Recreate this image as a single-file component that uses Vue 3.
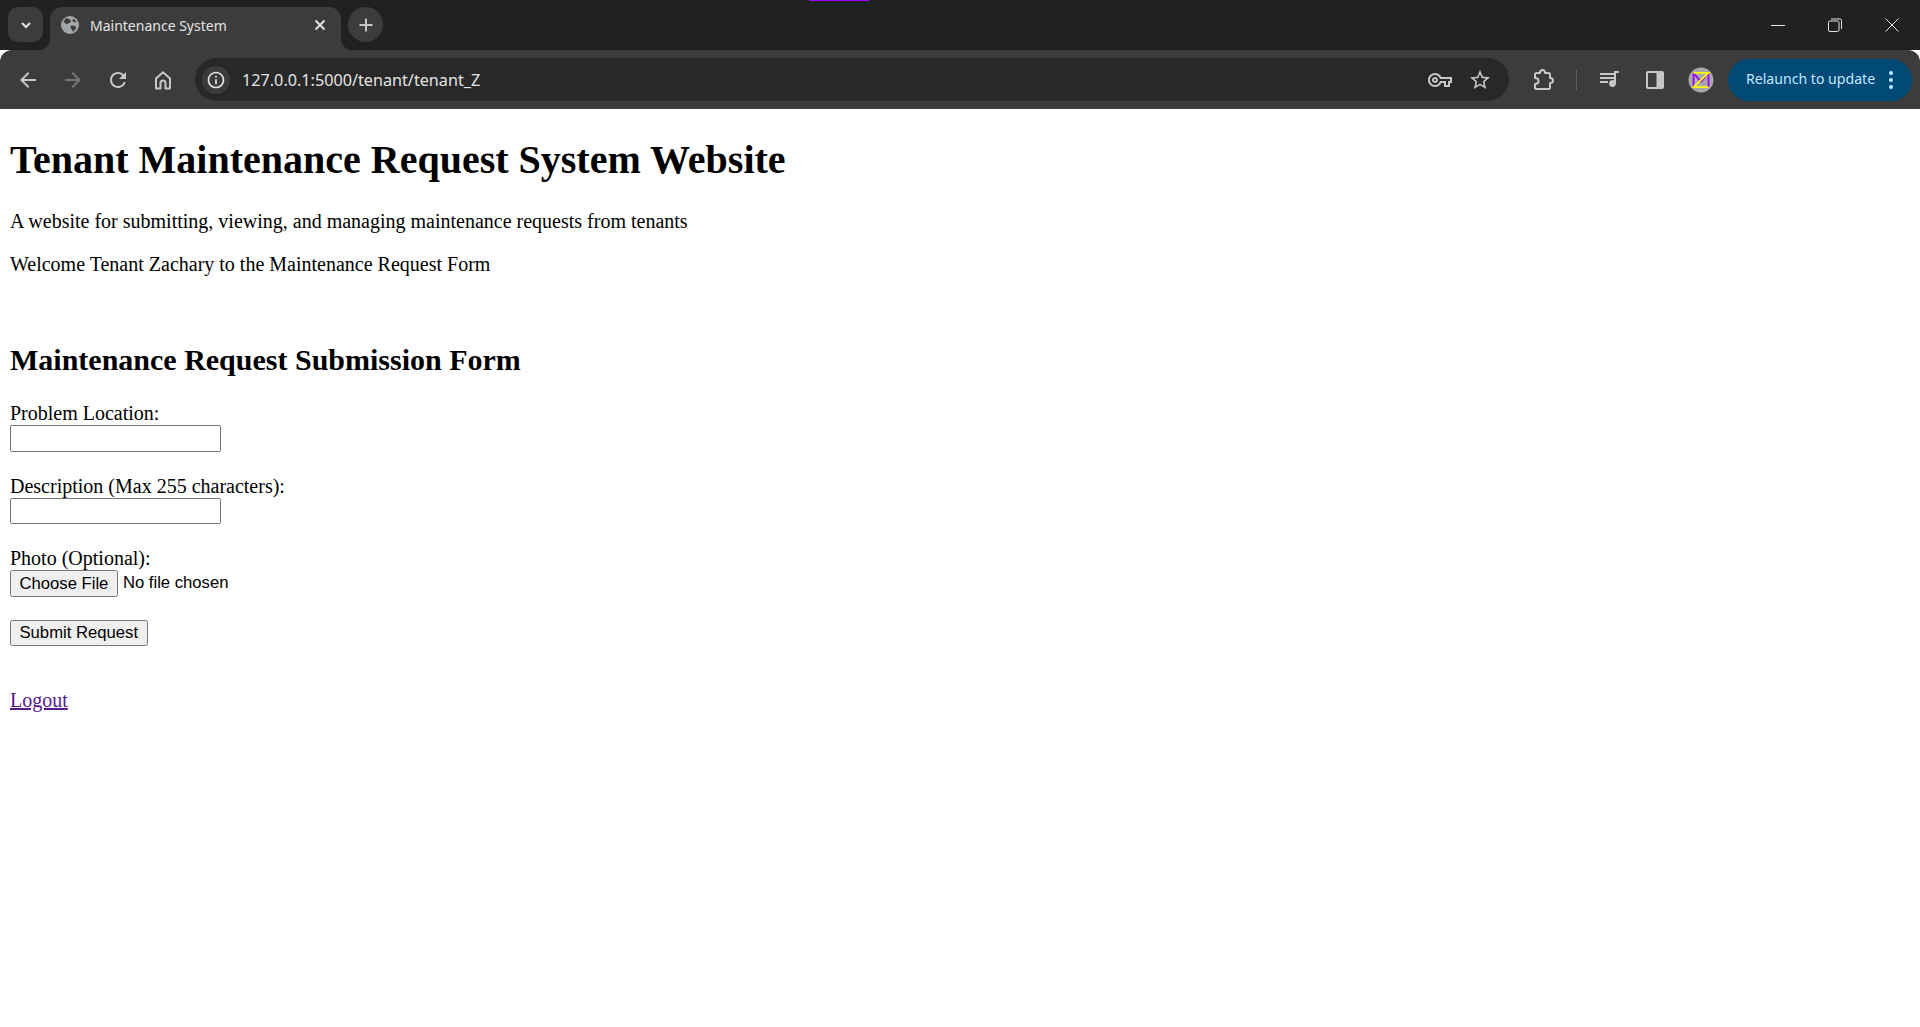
<template>
  <div class="browser">
    <div class="tabstrip">
      <button class="tab-search">
        <svg width="16" height="16" viewBox="0 0 16 16"><path d="M4 6l4 4 4-4" fill="none" stroke="#e3e3e3" stroke-width="2"/></svg>
      </button>
      <div class="tab">
        <svg class="favicon" width="18" height="18" viewBox="0 0 18 18">
          <circle cx="9" cy="9" r="9" fill="#a3a6a8"/>
          <path d="M5 2l4 1.500 1 2-2.500 2-2 .5L2.500 6zM10 9.500l4.500.5.500 2.500-3 3.500-1-2.500-1.500-1.500zM12 2.500l3.500 3-2 1-2-1.500z" fill="#3c3c3c"/>
        </svg>
        <span class="tab-title">Maintenance System</span>
        <svg class="tab-close" width="12" height="12" viewBox="0 0 12 12"><path d="M1.500 1.500l9 9M10.500 1.500l-9 9" stroke="#e3e3e3" stroke-width="2"/></svg>
      </div>
      <button class="new-tab">
        <svg width="16" height="16" viewBox="0 0 16 16"><path d="M8 1.500v13M1.500 8h13" stroke="#c7c7c7" stroke-width="2"/></svg>
      </button>
      <div class="tabstrip-space"><i class="group-line"></i></div>
      <div class="window-buttons">
        <svg width="14" height="14" viewBox="0 0 14 14"><path d="M0 7.500h14" stroke="#e3e3e3"/></svg>
        <svg width="14" height="14" viewBox="0 0 14 14" fill="none" stroke="#e3e3e3"><rect x=".5" y="3" width="10.500" height="10.500" rx="1.500"/><path d="M3 1h9a1.500 1.500 0 0 1 1.500 1.500V11"/></svg>
        <svg width="14" height="14" viewBox="0 0 14 14"><path d="M.5.500l13 13M13.500.500l-13 13" stroke="#e3e3e3"/></svg>
      </div>
    </div>
    <div class="toolbar">
      <div class="nav-icons">
        <svg v-for="n in navIcons" :key="n.d" width="24" height="24" viewBox="0 0 24 24"><path :d="n.d" :fill="n.color"/></svg>
        <svg width="24" height="24" viewBox="0 0 24 24"><path d="M5 20.500V10.500L12 4.300l7 6.200v10h-4.500V15a2.500 2.500 0 0 0-5 0v5.500z" fill="none" stroke="#c7c7c7" stroke-width="2" stroke-linejoin="round"/></svg>
      </div>
      <div class="omnibox">
        <span class="info-chip">
          <svg width="20" height="20" viewBox="0 0 24 24"><path fill="#e3e3e3" d="M11 7h2v2h-2zm0 4h2v6h-2zm1-9C6.480 2 2 6.480 2 12s4.480 10 10 10 10-4.480 10-10S17.520 2 12 2zm0 18c-4.410 0-8-3.590-8-8s3.590-8 8-8 8 3.590 8 8-3.590 8-8 8z"/></svg>
        </span>
        <span class="url">127.0.0.1:5000/tenant/tenant_Z</span>
        <svg class="key" width="24" height="24" viewBox="0 0 24 24"><path fill="#c7c7c7" d="M22 19h-6v-4h-2.680c-1.140 2.420-3.600 4-6.320 4-3.860 0-7-3.140-7-7s3.140-7 7-7c2.720 0 5.170 1.580 6.320 4H24v6h-2v4zm-4-2h2v-4h2v-2H11.940l-.23-.67C11.010 8.340 9.110 7 7 7c-2.760 0-5 2.240-5 5s2.240 5 5 5c2.110 0 4.010-1.340 4.710-3.330l.23-.67H18v4zM7 15c-1.650 0-3-1.350-3-3s1.350-3 3-3 3 1.350 3 3-1.350 3-3 3zm0-4c-.55 0-1 .45-1 1s.45 1 1 1 1-.45 1-1-.45-1-1-1z"/></svg>
        <svg class="star" width="24" height="24" viewBox="0 0 24 24"><path fill="#c7c7c7" d="M22 9.240l-7.190-.62L12 2 9.190 8.630 2 9.240l5.460 4.730L5.820 21 12 17.270 18.180 21l-1.630-7.030L22 9.240zM12 15.400l-3.760 2.270 1-4.280-3.320-2.880 4.380-.38L12 6.100l1.710 4.040 4.380.38-3.320 2.880 1 4.280L12 15.400z"/></svg>
      </div>
      <div class="tools">
        <svg class="ext" width="24" height="24" viewBox="0 0 24 24"><path fill="none" stroke="#c7c7c7" stroke-width="2" stroke-linejoin="round" d="M4.500 21a1.500 1.500 0 0 1-1.500-1.500V16c2 0 3.500-1 3.500-3S5 10 3 10V6.500A1.500 1.500 0 0 1 4.500 5H8c0-1.500 1-3 2.500-3S13 3.500 13 5h3.500A1.500 1.500 0 0 1 18 6.500V10c1.500 0 3 1 3 2.500S19.500 15 18 15v4.500a1.500 1.500 0 0 1-1.500 1.500z"/></svg>
        <i class="sep"></i>
        <svg width="24" height="24" viewBox="0 0 24 24"><path fill="#c7c7c7" d="M2 5h14v2H2zm0 4h14v2H2zm0 4h8v2H2zM21 3v2h-3v10.500a3.500 3.500 0 1 1-2-3.150V3z"/></svg>
        <svg width="24" height="24" viewBox="0 0 24 24"><rect x="3" y="3" width="18" height="18" rx="2" fill="#c7c7c7"/><rect x="5" y="5" width="8.500" height="14" fill="#3c3c3c"/></svg>
        <svg class="avatar" width="26" height="26" viewBox="0 0 26 26">
          <circle cx="13" cy="13" r="12.500" fill="#a8a8a8"/>
          <path d="M5.500 6v14M20.500 6v14M5.500 6l7.500 9M20.500 6l-7.500 9" stroke="#a000ff" stroke-width="1.800" fill="none"/>
          <path d="M5.500 5.800h15l-15 14.400h15" stroke="#ffff00" stroke-width="1.800" fill="none"/>
        </svg>
      </div>
      <div class="relaunch">
        <span>Relaunch to update</span>
        <svg width="6" height="20" viewBox="0 0 6 20"><circle cx="3" cy="3" r="2" fill="#c2e7ff"/><circle cx="3" cy="10" r="2" fill="#c2e7ff"/><circle cx="3" cy="17" r="2" fill="#c2e7ff"/></svg>
      </div>
    </div>
  </div>

  <main class="page">
    <h1>Tenant Maintenance Request System Website</h1>
    <p>A website for submitting, viewing, and managing maintenance requests from tenants</p>
    <p>Welcome Tenant Zachary to the Maintenance Request Form</p>
    <br>
    <h2>Maintenance Request Submission Form</h2>
    <form @submit.prevent>
      <label for="location">Problem Location:</label><br>
      <input id="location" class="field" type="text"><br><br>
      <label for="description">Description (Max 255 characters):</label><br>
      <input id="description" class="field" type="text"><br><br>
      <label for="photo">Photo (Optional):</label><br>
      <input id="photo" type="file"><br><br>
      <button type="submit">Submit Request</button>
    </form>
    <br>
    <p><a href="#" class="logout">Logout</a></p>
  </main>
</template>

<script setup>
const navIcons = [
  { d: 'M20 11H7.830l5.590-5.590L12 4l-8 8 8 8 1.410-1.410L7.830 13H20v-2z', color: '#c7c7c7' },
  { d: 'M12 4l-1.410 1.410L16.170 11H4v2h12.170l-5.580 5.590L12 20l8-8z', color: '#757575' },
  { d: 'M17.650 6.350A7.958 7.958 0 0 0 12 4c-4.420 0-7.990 3.580-7.990 8s3.570 8 7.990 8c3.730 0 6.840-2.550 7.730-6h-2.080A5.990 5.990 0 0 1 12 18c-3.310 0-6-2.690-6-6s2.690-6 6-6c1.660 0 3.140.69 4.220 1.780L13 11h7V4l-2.350 2.350z', color: '#c7c7c7' }
]
</script>

<style>
body {
  background: #fff;
}
</style>

<style scoped>
.browser {
  font-family: "Noto Sans", "Open Sans", sans-serif;
}
.tabstrip {
  height: 50px;
  background: #202221;
  display: flex;
  align-items: flex-start;
  padding-left: 8px;
  box-sizing: border-box;
}
.tabstrip button {
  border: none;
  padding: 0;
  background: #3c3c3c;
  display: flex;
  align-items: center;
  justify-content: center;
}
.tab-search {
  width: 35px;
  height: 35px;
  margin-top: 7px;
  border-radius: 10px;
}
.tab {
  position: relative;
  width: 291px;
  height: 43px;
  margin: 7px 0 0 7px;
  padding: 0 15px 7px 11px;
  box-sizing: border-box;
  background: #3c3c3c;
  border-radius: 12px 12px 0 0;
  display: flex;
  align-items: center;
  color: #e3e3e3;
}
.tab::before,
.tab::after {
  content: "";
  position: absolute;
  bottom: 0;
  width: 12px;
  height: 12px;
}
.tab::before {
  left: -12px;
  background: radial-gradient(circle at 0 0, transparent 12px, #3c3c3c 12.500px);
}
.tab::after {
  right: -12px;
  background: radial-gradient(circle at 100% 0, transparent 12px, #3c3c3c 12.500px);
}
.favicon {
  flex: none;
}
.tab-title {
  margin-left: 11px;
  font-size: 14px;
  flex: 1;
}
.new-tab {
  width: 35px;
  height: 35px;
  margin: 7px 0 0 7px;
  border-radius: 50%;
}
.tabstrip-space {
  flex: 1;
  padding-left: 426px;
}
.group-line {
  display: block;
  width: 60px;
  height: 1px;
  background: #a000ff;
}
.window-buttons {
  display: flex;
  gap: 43px;
  padding: 18px 21px 0 0;
}
.toolbar {
  height: 59px;
  background: #3c3c3c;
  border-radius: 12px 12px 0 0;
  display: flex;
  align-items: center;
  padding: 0 8px 0 0;
  box-sizing: border-box;
}
.nav-icons {
  display: flex;
  gap: 21px;
  padding-left: 16px;
  width: 195px;
  box-sizing: border-box;
  flex: none;
}
.omnibox {
  flex: 1;
  height: 43px;
  background: #282828;
  border-radius: 22px;
  display: flex;
  align-items: center;
  padding: 0 17px 0 7px;
  box-sizing: border-box;
}
.info-chip {
  width: 28px;
  height: 28px;
  border-radius: 50%;
  background: #3c3c3c;
  display: flex;
  align-items: center;
  justify-content: center;
  flex: none;
}
.url {
  flex: 1;
  margin-left: 12px;
  font-size: 16.200px;
  color: #e3e3e3;
}
.star {
  margin-left: 16px;
}
.tools {
  display: flex;
  align-items: center;
  gap: 21px;
  margin: 0 14px 0 23px;
}
.ext {
  margin-right: -1px;
}
.sep {
  display: block;
  width: 1.500px;
  height: 20px;
  background: #5e5e5e;
}
.relaunch {
  width: 184px;
  height: 42px;
  border-radius: 21px;
  background: #004a77;
  color: #c2e7ff;
  font-size: 14.100px;
  display: flex;
  align-items: center;
  justify-content: space-between;
  padding: 0 18px;
  box-sizing: border-box;
  flex: none;
}
.relaunch span {
  margin-bottom: 2px;
}

.page {
  zoom: 1.25;
  padding: 0 8px;
  font-family: "Liberation Serif", "Times New Roman", serif;
  color: #000;
}
.page input,
.page button {
  font-family: "Liberation Sans", Arial, sans-serif;
}
.field {
  width: 169px;
  box-sizing: border-box;
}
.logout {
  color: #551a8b;
}
</style>
